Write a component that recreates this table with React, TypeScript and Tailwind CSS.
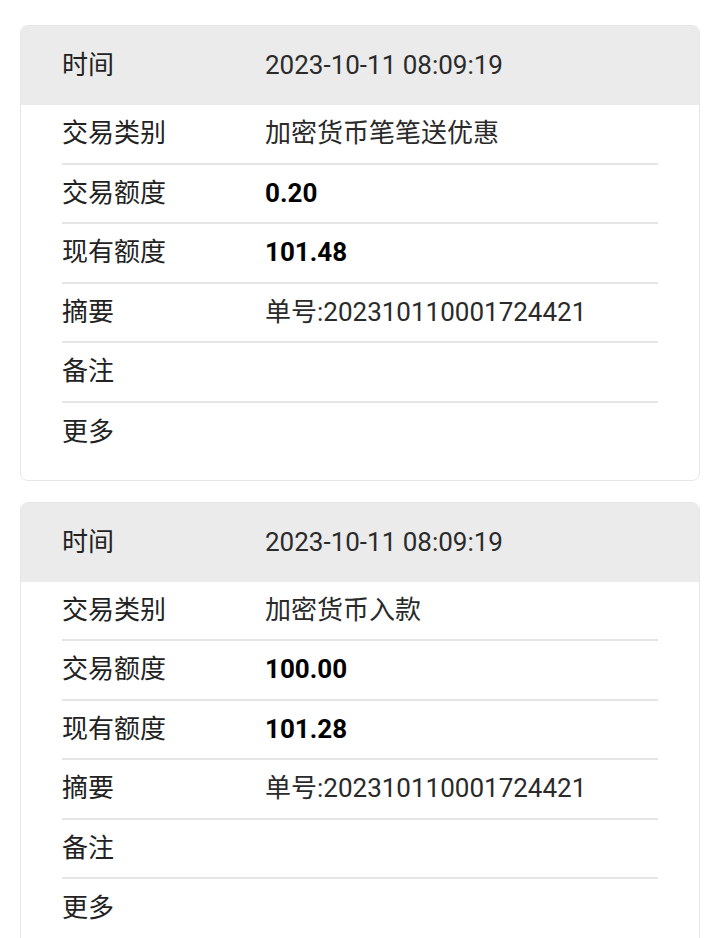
import React from "react";

type Row = { label: string; value?: string; bold?: boolean };

const cards: { time: string; rows: Row[] }[] = [
  {
    time: "2023-10-11 08:09:19",
    rows: [
      { label: "交易类别", value: "加密货币笔笔送优惠" },
      { label: "交易额度", value: "0.20", bold: true },
      { label: "现有额度", value: "101.48", bold: true },
      { label: "摘要", value: "单号:202310110001724421" },
      { label: "备注" },
      { label: "更多" },
    ],
  },
  {
    time: "2023-10-11 08:09:19",
    rows: [
      { label: "交易类别", value: "加密货币入款" },
      { label: "交易额度", value: "100.00", bold: true },
      { label: "现有额度", value: "101.28", bold: true },
      { label: "摘要", value: "单号:202310110001724421" },
      { label: "备注" },
      { label: "更多" },
    ],
  },
];

export default function App() {
  return (
    <div
      className="min-h-[938px] bg-white px-[20px] pt-[25px] flex flex-col gap-[20.5px]"
      style={{ fontFamily: 'Roboto, "Noto Sans CJK SC", sans-serif' }}
    >
      {cards.map((c, i) => (
        <div key={i} className="rounded-[8px] border border-[#e6e6e6] overflow-hidden bg-white">
          <div className="bg-[#ebebeb] h-[79px] flex items-center px-[41px] text-[26px] text-[#222]">
            <div className="w-[203px]">时间</div>
            <div className="text-[#2a2a2a]">{c.time}</div>
          </div>
          <div className="mx-[41px] pb-[18px]">
            {c.rows.map((r, j) => (
              <div
                key={j}
                className={`h-[59.5px] flex items-center text-[26px] ${j < c.rows.length - 1 ? "border-b-2 border-[#e5e5e5]" : ""}`}
              >
                <div className="w-[203px] text-[#222]">{r.label}</div>
                {r.value && (
                  <div className={r.bold ? "font-bold text-black" : "text-[#2a2a2a]"}>{r.value}</div>
                )}
              </div>
            ))}
          </div>
        </div>
      ))}
    </div>
  );
}
